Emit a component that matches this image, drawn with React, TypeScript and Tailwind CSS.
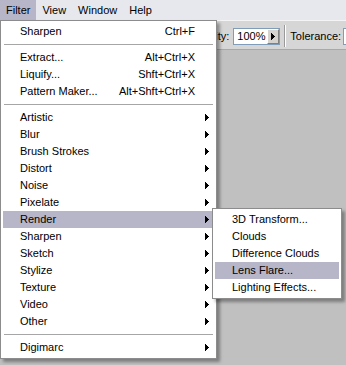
const filterItems: (
  | { kind: "item"; label: string; shortcut?: string; sub?: boolean; active?: boolean }
  | { kind: "sep" }
)[] = [
  { kind: "item", label: "Sharpen", shortcut: "Ctrl+F" },
  { kind: "sep" },
  { kind: "item", label: "Extract...", shortcut: "Alt+Ctrl+X" },
  { kind: "item", label: "Liquify...", shortcut: "Shft+Ctrl+X" },
  { kind: "item", label: "Pattern Maker...", shortcut: "Alt+Shft+Ctrl+X" },
  { kind: "sep" },
  { kind: "item", label: "Artistic", sub: true },
  { kind: "item", label: "Blur", sub: true },
  { kind: "item", label: "Brush Strokes", sub: true },
  { kind: "item", label: "Distort", sub: true },
  { kind: "item", label: "Noise", sub: true },
  { kind: "item", label: "Pixelate", sub: true },
  { kind: "item", label: "Render", sub: true, active: true },
  { kind: "item", label: "Sharpen", sub: true },
  { kind: "item", label: "Sketch", sub: true },
  { kind: "item", label: "Stylize", sub: true },
  { kind: "item", label: "Texture", sub: true },
  { kind: "item", label: "Video", sub: true },
  { kind: "item", label: "Other", sub: true },
  { kind: "sep" },
  { kind: "item", label: "Digimarc", sub: true },
];

const renderItems = [
  { label: "3D Transform...", active: false },
  { label: "Clouds", active: false },
  { label: "Difference Clouds", active: false },
  { label: "Lens Flare...", active: true },
  { label: "Lighting Effects...", active: false },
];

function Arrow({ className = "" }: { className?: string }) {
  return (
    <svg width="4" height="7" viewBox="0 0 4 7" shapeRendering="crispEdges" className={`shrink-0 ${className}`}>
      <path d="M0 0h1v7h-1zM1 1h1v5h-1zM2 2h1v3h-1zM3 3h1v1h-1z" fill="#000" />
    </svg>
  );
}

function MenuRow({ label, shortcut, sub, active }: { label: string; shortcut?: string; sub?: boolean; active?: boolean }) {
  return (
    <div className={`flex h-[17px] items-center pl-[17px] ${active ? "bg-[#b7b6c9]" : ""}`}>
      <span className="flex-1 whitespace-nowrap">{label}</span>
      {shortcut ? <span className="mr-[19px] whitespace-nowrap">{shortcut}</span> : null}
      {sub ? <Arrow className="mr-[5px]" /> : null}
    </div>
  );
}

export default function App() {
  return (
    <div className="relative h-[365px] w-[346px] overflow-hidden bg-[#c0c0c0] font-['Liberation_Sans',Arial,sans-serif] text-[11px] text-black">
      {/* menu bar */}
      <div className="flex h-[20px] items-center bg-[#e6e8ee]">
        <span className="flex h-full items-center bg-[#b7b6c9] px-[6px]">Filter</span>
        <span className="px-[6px]">View</span>
        <span className="px-[6px]">Window</span>
        <span className="px-[6px]">Help</span>
      </div>

      {/* options bar */}
      <div className="flex h-[30px] items-center border-t border-b border-t-[#f4f4f4] border-b-[#a8a8a8] bg-[#d6d6d6] pt-[2px]">
        <span className="ml-[189px]">Opacity:</span>
        <div className="ml-[4px] flex h-[17px] border border-[#7f9db9] bg-white">
          <span className="w-[33px] pl-[3px] leading-[15px]">100%</span>
          <span className="flex w-[12px] items-center justify-center border-t border-l border-r border-b border-t-white border-l-white border-r-[#808080] border-b-[#808080] bg-[#d6d3ce]">
            <Arrow />
          </span>
        </div>
        <span className="mx-[4px] h-[22px] w-[2px] border-l border-r border-l-[#9a9a9a] border-r-white" />
        <span>Tolerance:</span>
        <div className="ml-[2px] flex h-[17px] w-[30px] border border-[#7f9db9] bg-white pl-[3px] leading-[15px]">3</div>
      </div>

      {/* Filter menu */}
      <div className="absolute left-0 top-[20px] w-[217px] border border-[#8c8c8c] bg-white p-[2px] shadow-[3px_3px_3px_rgba(0,0,0,0.35)]">
        {filterItems.map((it, i) =>
          it.kind === "sep" ? (
            <div key={i} className="flex h-[9px] items-center px-[1px]">
              <div className="h-px w-full bg-[#a6a6a6]" />
            </div>
          ) : (
            <MenuRow key={i} label={it.label} shortcut={it.shortcut} sub={it.sub} active={it.active} />
          )
        )}
      </div>

      {/* Render submenu */}
      <div className="absolute left-[212px] top-[208px] w-[130px] border border-[#8c8c8c] bg-white p-[2px] shadow-[3px_3px_3px_rgba(0,0,0,0.35)]">
        {renderItems.map((it) => (
          <MenuRow key={it.label} label={it.label} active={it.active} />
        ))}
      </div>
    </div>
  );
}
